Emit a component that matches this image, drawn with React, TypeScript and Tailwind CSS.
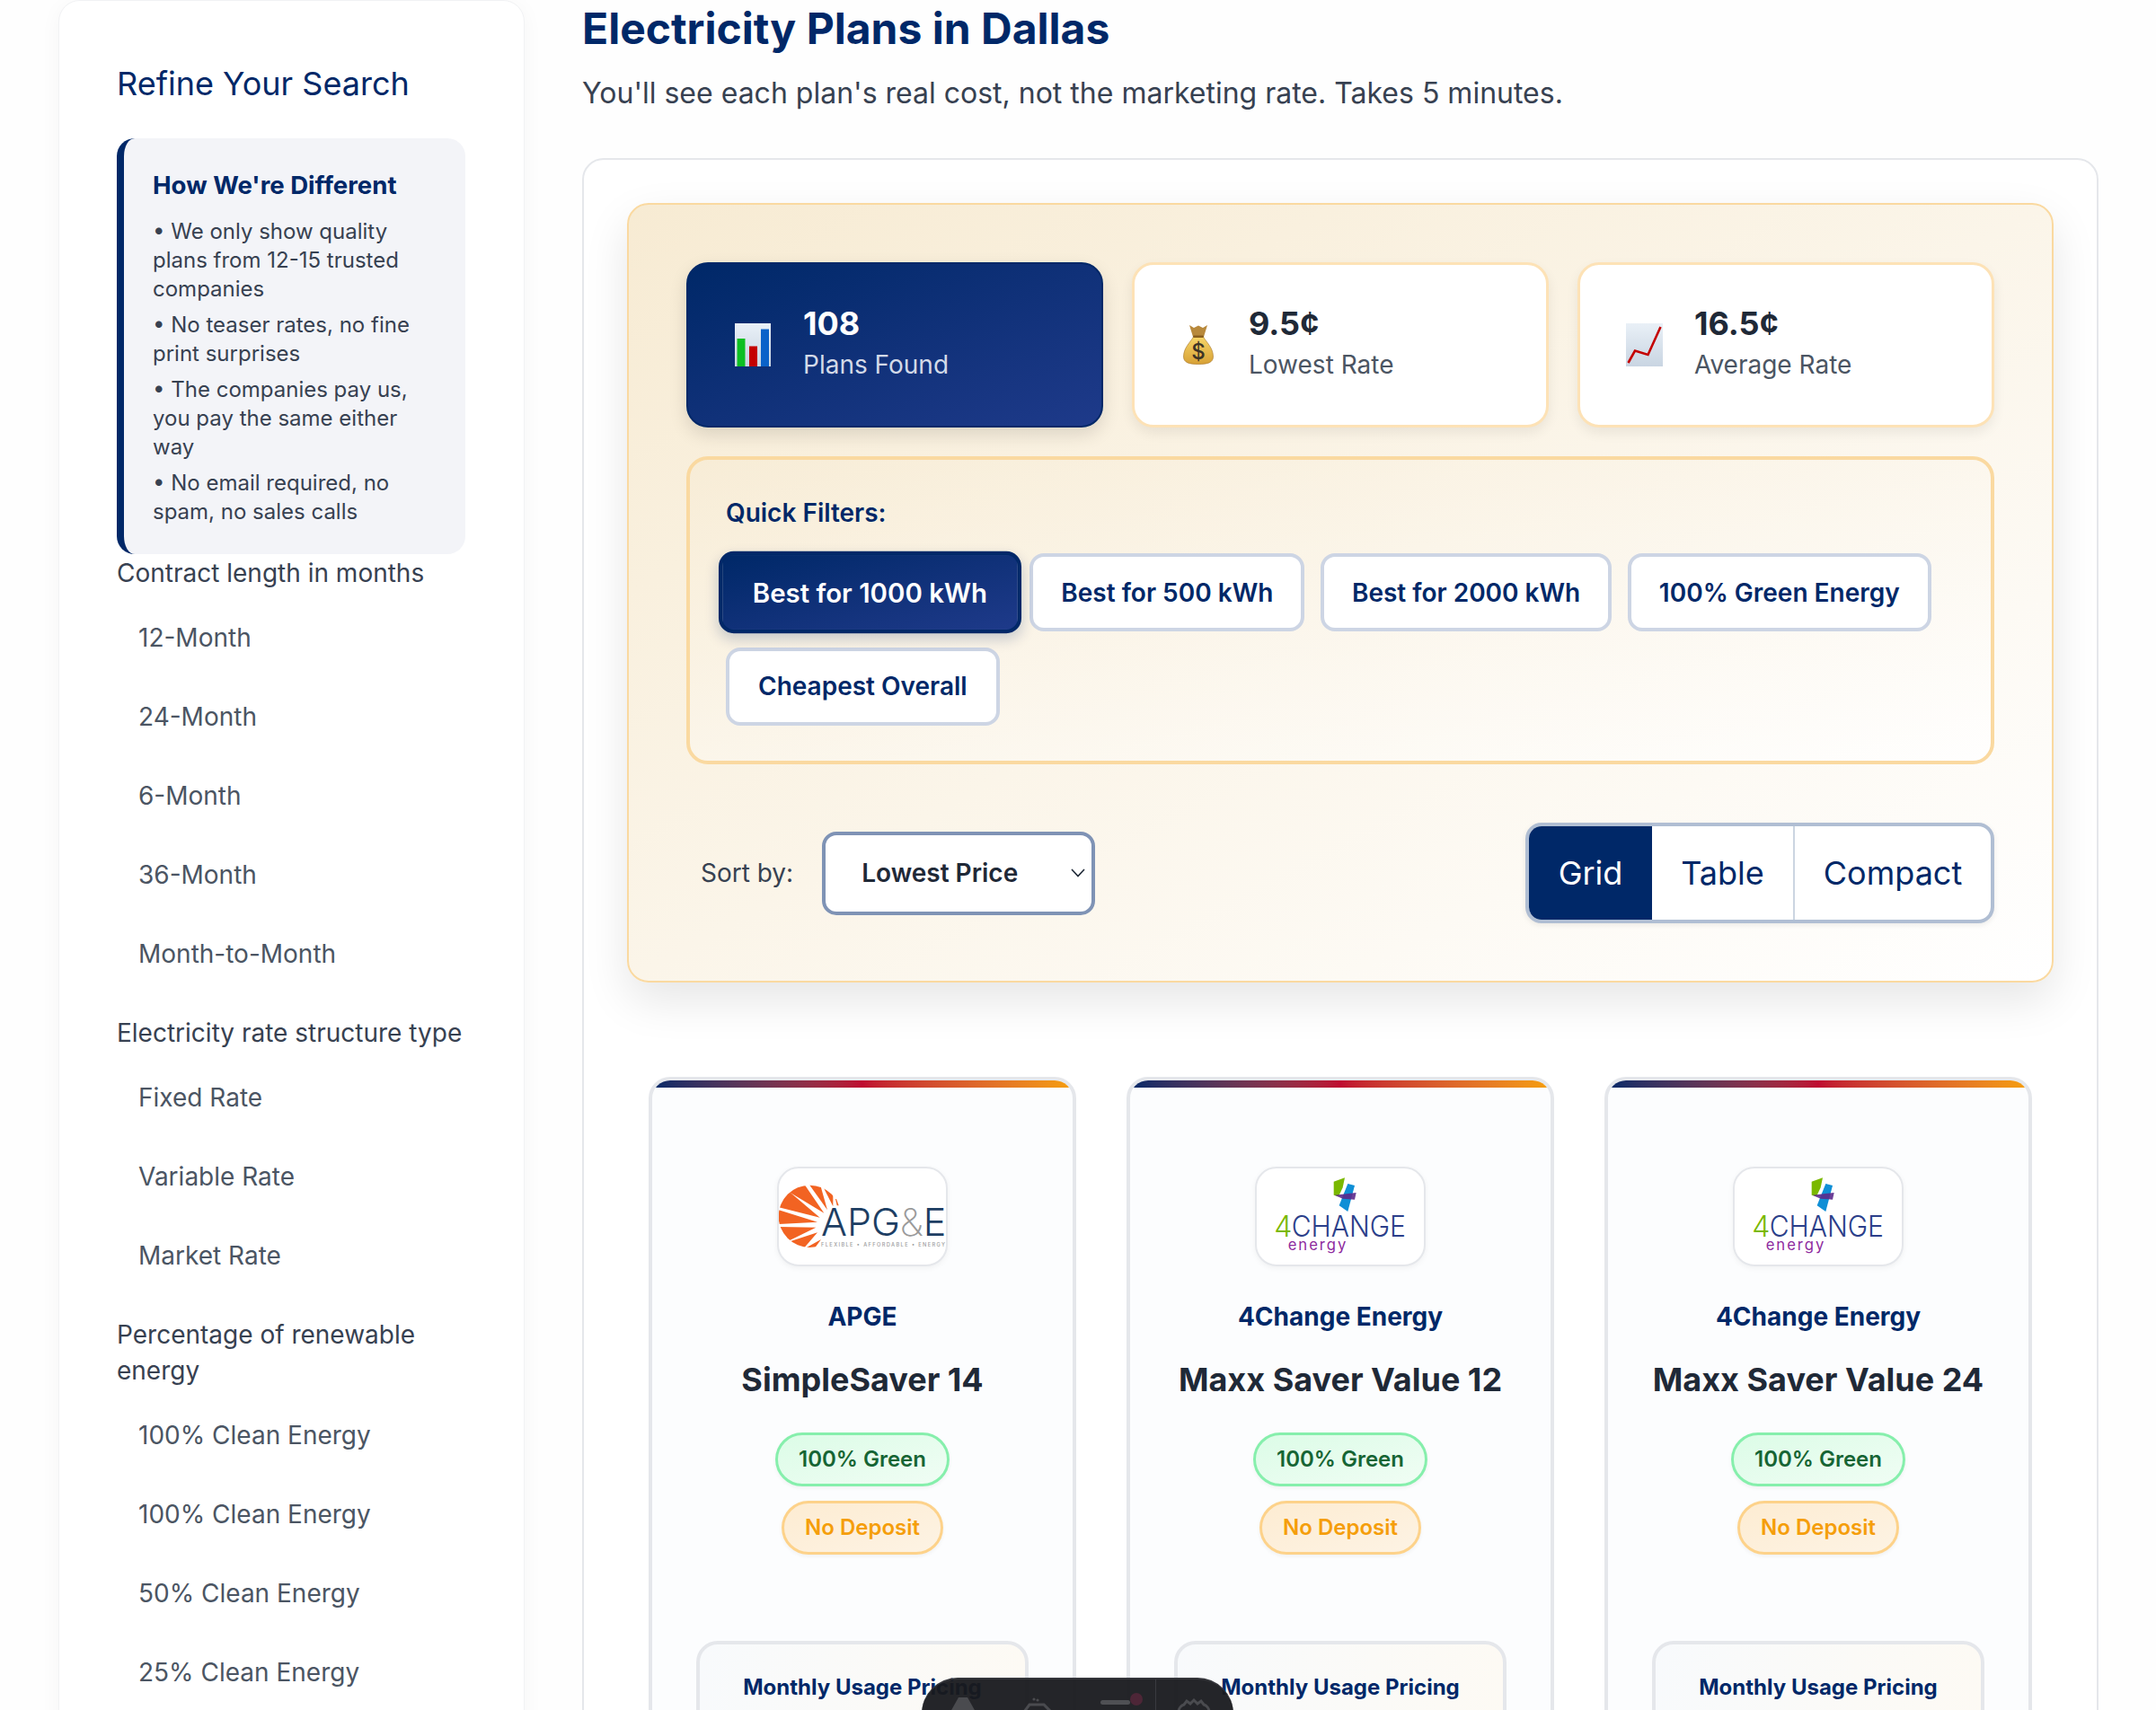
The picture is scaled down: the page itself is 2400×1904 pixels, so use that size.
import React from 'react';

const font = { fontFamily: 'Inter, "Liberation Sans", sans-serif' };

const contractItems = ['12-Month', '24-Month', '6-Month', '36-Month', 'Month-to-Month'];
const rateItems = ['Fixed Rate', 'Variable Rate', 'Market Rate'];
const greenItems = ['100% Clean Energy', '100% Clean Energy', '50% Clean Energy', '25% Clean Energy'];

function FilterGroup({ label, items }: { label: string; items: string[] }) {
    return (
        <div className="mb-6">
            <div className="text-[28px] leading-[40px] text-[#374151] mb-2 w-[392px]">{label}</div>
            {items.map((item, i) => (
                <div key={i} className="h-[88px] flex items-center pl-6 text-[28px] text-[#4b5563]">
                    {item}
                </div>
            ))}
        </div>
    );
}

function Sidebar() {
    return (
        <aside className="w-[519px] h-[2100px] shrink-0 bg-white border border-[#f1f2f4] rounded-[24px] shadow-[0_4px_24px_rgba(0,0,0,0.04)] px-16 pt-[68px]">
            <h2 className="text-[36px] leading-[48px] font-normal text-[#002868] mb-[37px]">Refine Your Search</h2>
            <div className="w-[388px] h-[463px] bg-[#f3f4f8] border-l-8 border-[#002868] rounded-[20px] pl-8 pr-8 pt-[33px]">
                <h3 className="text-[27.6px] leading-[38px] font-bold text-[#002868] mb-[17px]">How We're Different</h3>
                <p className="text-[24px] leading-[32px] text-[#374151] mb-2">• We only show quality plans from 12-15 trusted companies</p>
                <p className="text-[24px] leading-[32px] text-[#374151] mb-2">• No teaser rates, no fine print surprises</p>
                <p className="text-[24px] leading-[32px] text-[#374151] mb-2">• The companies pay us, you pay the same either way</p>
                <p className="text-[24px] leading-[32px] text-[#374151]">• No email required, no spam, no sales calls</p>
            </div>
            <div className="mt-px">
                <FilterGroup label="Contract length in months" items={contractItems} />
                <FilterGroup label="Electricity rate structure type" items={rateItems} />
                <FilterGroup label="Percentage of renewable energy" items={greenItems} />
            </div>
        </aside>
    );
}

function ChartIcon() {
    return (
        <svg width="40" height="48" viewBox="0 0 40 48" className="shrink-0">
            <defs>
                <linearGradient id="chartBg" x1="0" y1="0" x2="0" y2="1">
                    <stop offset="0" stopColor="#e9f0f7" />
                    <stop offset="1" stopColor="#c9d5e2" />
                </linearGradient>
            </defs>
            <rect width="40" height="48" fill="url(#chartBg)" />
            <rect x="2.5" y="17" width="9" height="31" fill="#0cbf22" />
            <rect x="16" y="25.5" width="9" height="22.5" fill="#c40000" />
            <rect x="29" y="6.5" width="9" height="41.5" fill="#0a62c9" />
        </svg>
    );
}

function MoneyBagIcon() {
    return (
        <svg width="34" height="44" viewBox="0 0 34 44" className="shrink-0">
            <defs>
                <linearGradient id="bagFill" x1="0" y1="0" x2="0" y2="1">
                    <stop offset="0" stopColor="#f6d568" />
                    <stop offset="1" stopColor="#d7a136" />
                </linearGradient>
            </defs>
            <path d="M7 0 L12 3 L17 0.5 L22 3 L27 0 L23 13 L11 13 Z" fill="#b8893c" />
            <path d="M11.5 13 L22.5 13 C25 18 33.5 25 33.5 35 C33.5 42 27 43.5 17 43.5 C7 43.5 0.5 42 0.5 35 C0.5 25 9 18 11.5 13 Z" fill="url(#bagFill)" stroke="#a4742a" strokeWidth="0.6" />
            <rect x="11" y="11.5" width="12" height="2.6" rx="1.3" fill="#8a5f1e" />
            <text x="17" y="37.5" textAnchor="middle" fontSize="24" fontWeight="500" fill="#3d3426" style={font}>$</text>
        </svg>
    );
}

function TrendIcon() {
    return (
        <svg width="41" height="48" viewBox="0 0 41 48" className="shrink-0">
            <defs>
                <linearGradient id="trendBg" x1="0" y1="0" x2="0" y2="1">
                    <stop offset="0" stopColor="#e9f0f7" />
                    <stop offset="1" stopColor="#c9d5e2" />
                </linearGradient>
            </defs>
            <rect width="41" height="48" fill="url(#trendBg)" />
            <path d="M2.5 44 L10 30.5 L24.5 35 L38.5 4" fill="none" stroke="#c40000" strokeWidth="2.6" />
        </svg>
    );
}

function StatCard({ icon, value, label, primary }: { icon: React.ReactNode; value: string; label: string; primary?: boolean }) {
    return (
        <div
            className={
                primary
                    ? 'h-[184px] flex items-center gap-[36px] pl-[52px] rounded-[24px] border-2 border-[#002868] bg-linear-to-br from-[#002868] to-[#1e3a8a] shadow-[0_8px_20px_rgba(0,0,0,0.12)]'
                    : 'h-[184px] flex items-center gap-[36px] pl-[51px] rounded-[24px] border-[3px] border-[#fde2b6] bg-white shadow-[0_6px_14px_rgba(0,0,0,0.07)]'
            }
        >
            <div className="w-[40px] flex justify-center">{icon}</div>
            <div className="pb-[3px]">
                <div className={primary ? 'text-[36px] leading-[46px] font-bold text-white' : 'text-[36px] leading-[46px] font-bold text-[#1f2937]'}>{value}</div>
                <div className={primary ? 'text-[28px] leading-[46px] text-[#d3dae8]' : 'text-[28px] leading-[46px] text-[#4b5563]'}>{label}</div>
            </div>
        </div>
    );
}

const quickFilters = ['Best for 500 kWh', 'Best for 2000 kWh', '100% Green Energy'];

function QuickFilters() {
    return (
        <div className="border-4 border-[#fad9a0] rounded-[24px] p-10 h-[343px] bg-linear-to-br from-[#f7ebd3]/60 to-white/80 mt-8">
            <div className="text-[28px] leading-[38px] font-semibold text-[#002868] mb-[26px]">Quick Filters:</div>
            <div className="flex flex-wrap gap-[17.6px]">
                <button className="h-[87px] px-[32px] rounded-[16px] border-4 border-[#002868] bg-linear-to-br from-[#002868] to-[#1e3a8a] text-[28px] font-semibold text-white scale-105 shadow-[0_6px_14px_rgba(0,40,104,0.2)]">
                    Best for 1000 kWh
                </button>
                {quickFilters.map((f) => (
                    <button key={f} className="h-[87px] px-[31px] rounded-[16px] border-4 border-[#cdd5e4] bg-white text-[28px] font-semibold text-[#002868]">
                        {f}
                    </button>
                ))}
                <button className="h-[87px] px-[32px] rounded-[16px] border-4 border-[#cdd5e4] bg-white text-[28px] font-semibold text-[#002868]">
                    Cheapest Overall
                </button>
            </div>
        </div>
    );
}

function SortRow() {
    return (
        <div className="flex items-center justify-between mt-[65px] pl-4 h-[112px]">
            <div className="flex items-center">
                <span className="text-[28px] text-[#374151] mr-[32px]">Sort by:</span>
                <div className="relative w-[304px] h-[93px] border-4 border-[#7f93b5] rounded-[16px] bg-white flex items-center pl-[40px] text-[28px] font-semibold text-[#1f2937]">
                    Lowest Price
                    <svg width="18" height="12" viewBox="0 0 18 12" className="absolute right-[6px] top-[36px]">
                        <path d="M2 2 L9 9.5 L16 2" fill="none" stroke="#1f2937" strokeWidth="1.6" />
                    </svg>
                </div>
            </div>
            <div className="flex h-[112px] border-4 border-[#b0bed3] rounded-[18px] overflow-hidden bg-white shadow-[0_2px_6px_rgba(0,0,0,0.08)]">
                <div className="w-[137px] bg-[#002868] text-white text-[36px] flex items-center justify-center">Grid</div>
                <div className="w-[159px] text-[#002868] text-[36px] flex items-center justify-center border-r-2 border-[#cbd5e1]">Table</div>
                <div className="flex-1 w-[218px] text-[#002868] text-[36px] flex items-center justify-center">Compact</div>
            </div>
        </div>
    );
}

function ApgeLogo() {
    return (
        <svg width="186" height="107" viewBox="81 61 558 321">
            <defs>
                <clipPath id="sunClip">
                    <circle cx="184" cy="221" r="104" />
                </clipPath>
            </defs>
            <g clipPath="url(#sunClip)" fill="#f26322">
                <polygon points="225,115 262,115 262,188" />
                <polygon points="243,200 172,100 215,100" />
                <polygon points="232,210 108,135 160,105" />
                <polygon points="218,225 70,188 112,135" />
                <polygon points="210,240 70,248 70,196" />
                <polygon points="205,258 110,305 70,256" />
                <polygon points="210,275 158,335 118,305" />
                <polygon points="168,328 222,298 195,335" />
            </g>
            <polygon points="270,163 273,163 281,185 275,185" fill="#f26322" />
            <text x="222" y="286" fontSize="128" fontWeight="300" fill="#1d3e63" textLength="418" lengthAdjust="spacingAndGlyphs" style={font}>
                APG<tspan fill="#9a9a9a" fontWeight="200">&amp;</tspan>E
            </text>
            <text x="222" y="322" fontSize="17" fontWeight="500" fill="#9b9b9b" textLength="414" style={font}>FLEXIBLE • AFFORDABLE • ENERGY</text>
        </svg>
    );
}

function FourChangeLogo() {
    return (
        <svg width="186" height="107" viewBox="58 61 558 321">
            <polygon points="315,105 352,92 345,125 331,155 315,150" fill="#7ab800" />
            <polygon points="362,112 385,118 362,205 333,185" fill="#0f8fd6" />
            <polygon points="318,150 390,142 385,165 345,162" fill="#5c2a8c" fillOpacity="0.9" />
            <text x="116" y="288" fontSize="96" fontWeight="300" fill="#7ab800" style={font}>4</text>
            <text x="174" y="288" fontSize="96" fontWeight="300" fill="#2b3f8a" textLength="382" lengthAdjust="spacingAndGlyphs" style={font}>CHANGE</text>
            <text x="162" y="335" fontSize="50" fontWeight="400" fill="#8e2a9e" textLength="194" style={font}>energy</text>
        </svg>
    );
}

function PlanCard({ logo, company, name }: { logo: React.ReactNode; company: string; name: string }) {
    return (
        <div className="h-[900px] border-4 border-[#e5e7eb] rounded-[24px] overflow-hidden bg-[#fcfdfe] flex flex-col items-center">
            <div className="w-full h-2 shrink-0 bg-linear-to-r from-[#002868] via-[#bf0a30] to-[#f59e0b]" />
            <div className="mt-[88px] w-[190px] h-[111px] shrink-0 bg-white border-2 border-[#e5e7eb] rounded-[24px] shadow-[0_2px_6px_rgba(0,0,0,0.05)] overflow-hidden flex items-center justify-center">
                {logo}
            </div>
            <div className="mt-[37px] text-[28px] leading-[38px] font-bold text-[#002868]">{company}</div>
            <div className="mt-[28px] text-[36px] leading-[46px] font-bold text-[#1f2937]">{name}</div>
            <div className="mt-[36px] h-[60px] px-[23px] flex items-center rounded-full border-[3px] border-[#86efac] bg-linear-to-br from-[#dcfce7] to-[#f0fdf4] text-[24px] font-semibold text-[#166534] shadow-[0_2px_4px_rgba(0,0,0,0.05)]">
                100% Green
            </div>
            <div className="mt-4 h-[60px] px-[23px] flex items-center rounded-full border-[3px] border-[#fdd28a] bg-linear-to-br from-[#fdecd2] to-[#fdf3e4] text-[24px] font-semibold text-[#f59e0b] shadow-[0_2px_4px_rgba(0,0,0,0.05)]">
                No Deposit
            </div>
            <div className="mt-[96px] w-[370px] h-[200px] shrink-0 border-4 border-[#e5e7eb] rounded-[24px] bg-linear-to-r from-[#f8fafc] to-[#fdfaf4] pt-[30px] text-center text-[24px] leading-[36px] font-bold text-[#002868]">
                Monthly Usage Pricing
            </div>
        </div>
    );
}

function DevToolbar() {
    return (
        <div className="absolute left-[1026px] top-[1868px] w-[347px] h-[80px] rounded-[40px] bg-[#18191d]/95 border-t-2 border-[#34353a]">
            <svg width="347" height="36" viewBox="0 0 347 36" className="block">
                <path d="M32 36 L41 20 L51 20 L60 36 Z" fill="#4a4b4f" />
                <path d="M114 36 L120 28 L136 28 L144 36" fill="none" stroke="#4a4b4f" strokeWidth="3" />
                <circle cx="125" cy="22" r="1.6" fill="#4a4b4f" />
                <circle cx="129" cy="23" r="1.6" fill="#4a4b4f" />
                <rect x="199" y="23" width="33" height="5" rx="2.5" fill="#4f5054" />
                <circle cx="239" cy="22" r="7" fill="#4d2637" />
                <rect x="260" y="0" width="1" height="36" fill="#3a3b40" />
                <path d="M286 36 C286 32 289 29 292 28 L295 24 L299 27 L303 23 L307 27 L311 24 L314 28 C317 29 320 32 320 36" fill="none" stroke="#4a4b4f" strokeWidth="3" />
            </svg>
        </div>
    );
}

export default function App() {
    return (
        <div className="relative w-[2400px] h-[1904px] overflow-hidden bg-[#fefefe]" style={font}>
            <div className="flex pl-[65px]">
                <Sidebar />
                <main className="ml-[64px] w-[1688px] shrink-0">
                    <h1 className="text-[48px] leading-[64px] font-bold text-[#002868]">Electricity Plans in Dallas</h1>
                    <p className="mt-[8px] text-[32px] leading-[64px] text-[#374151]">You'll see each plan's real cost, not the marketing rate. Takes 5 minutes.</p>
                    <div className="mt-[40px] border-2 border-[#e5e7eb] rounded-[24px] bg-white p-12">
                        <div className="border-2 border-[#fad9a0] rounded-[24px] p-16 bg-linear-to-br from-[#f7ebd3] to-white shadow-[0_20px_50px_rgba(0,0,0,0.1)]">
                            <div className="grid grid-cols-3 gap-8">
                                <StatCard primary icon={<ChartIcon />} value="108" label="Plans Found" />
                                <StatCard icon={<MoneyBagIcon />} value="9.5¢" label="Lowest Rate" />
                                <StatCard icon={<TrendIcon />} value="16.5¢" label="Average Rate" />
                            </div>
                            <QuickFilters />
                            <SortRow />
                        </div>
                        <div className="grid grid-cols-3 gap-14 px-6 mt-[105px]">
                            <PlanCard logo={<ApgeLogo />} company="APGE" name="SimpleSaver 14" />
                            <PlanCard logo={<FourChangeLogo />} company="4Change Energy" name="Maxx Saver Value 12" />
                            <PlanCard logo={<FourChangeLogo />} company="4Change Energy" name="Maxx Saver Value 24" />
                        </div>
                    </div>
                </main>
            </div>
            <DevToolbar />
        </div>
    );
}
